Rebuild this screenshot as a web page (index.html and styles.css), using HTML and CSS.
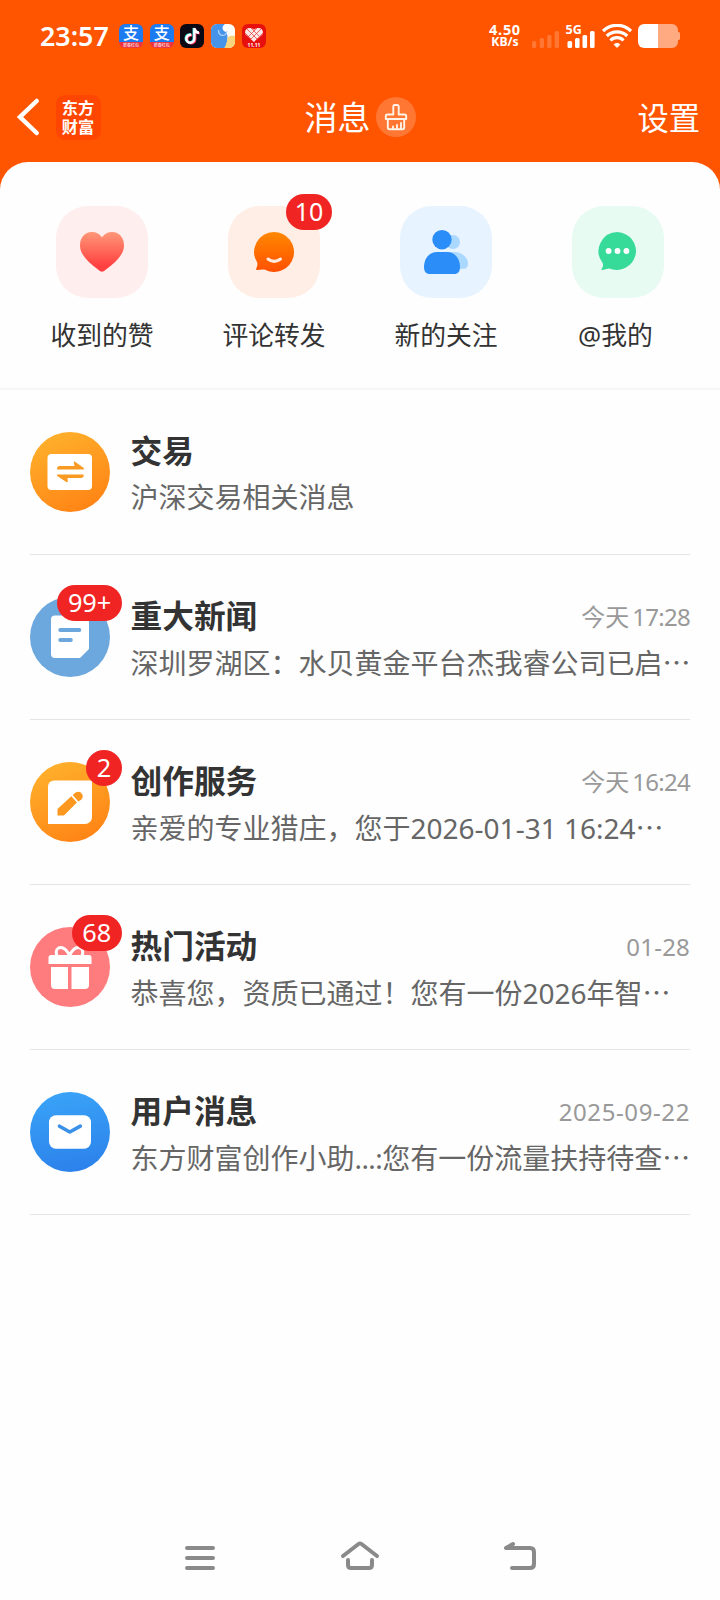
FILE: index.html
```html
<!DOCTYPE html>
<html lang="zh-CN">
<head>
<meta charset="utf-8">
<title>消息</title>
<link rel="stylesheet" href="styles.css">
</head>
<body>
<div class="screen">
  <div class="status">
    <span class="clock">23:57</span>
    <div class="apps">
      <div class="app pay"><b>支</b><i>新春红包</i></div>
      <div class="app pay"><b>支</b><i>新春红包</i></div>
      <svg class="app" viewBox="0 0 24 24"><rect width="24" height="24" fill="#0b0914"/><g fill="none" stroke-width="2.400"><path d="M11.300 10.800a4 4 0 1 0 3.100 3.900V4.300c.4 2.600 1.800 4.100 4.600 4.400" stroke="#f5335b" transform="translate(.8 .7)"/><path d="M11.300 10.800a4 4 0 1 0 3.100 3.900V4.300c.4 2.600 1.800 4.100 4.600 4.400" stroke="#3fe6e2" transform="translate(-.7 -.3)"/><path d="M11.300 10.800a4 4 0 1 0 3.100 3.900V4.300c.4 2.600 1.800 4.100 4.600 4.400" stroke="#fff"/></g></svg>
      <svg class="app" viewBox="0 0 24 24"><rect width="24" height="24" fill="#fffdf8"/><path d="M0 0h14c-3 2-3 5-1 7 2.500 1 3.500 3 3.500 6 0 4-1 8-3 11H0z" fill="#4693ea"/><path d="M16.500 13c3-1.500 5-1.500 7.500-1v12H13.500c2-4 3-7 3-11z" fill="#f8d47c"/><path d="M7.500 6c0 7 7.500 7 8.500 1" fill="none" stroke="#b5d6fb" stroke-width="1.200"/></svg>
      <svg class="app" viewBox="0 0 24 24"><rect width="24" height="24" fill="#e6100f"/><path d="M12 18 3.500 10.500C1.500 6 6 1.500 12 5.500c6-4 10.500.5 8.500 5z" fill="#fbe9e8"/><path d="m5 5 10 10M9 4l8 8M3 9l6 6M19 5 9 15M15 4 6 13M21 9l-8 8" stroke="#e6302f" stroke-width=".7"/><text class="tiny" x="12" y="23" text-anchor="middle">11.11</text></svg>
    </div>
    <div class="speed"><span class="num">4.50</span><span class="unit">KB/s</span></div>
    <svg class="sig" width="27" height="24" viewBox="0 0 27 24" fill="#fff" opacity=".2"><rect y="17" width="4.300" height="7" rx="1.500"/><rect x="7.700" y="14" width="4.300" height="10" rx="1.500"/><rect x="15.200" y="11" width="4.300" height="13" rx="1.500"/><rect x="22.700" y="7" width="4.300" height="17" rx="1.500"/></svg>
    <svg class="sig5" width="29" height="24" viewBox="0 0 29 24" fill="#fff"><text class="gen" x="-.5" y="10">5G</text><rect x="1.500" y="17" width="4.600" height="7" rx="1.500"/><rect x="9" y="14" width="4.600" height="10" rx="1.500"/><rect x="16.500" y="11" width="4.600" height="13" rx="1.500"/><rect x="24" y="7" width="4.600" height="17" rx="1.500"/></svg>
    <svg class="wifi" width="30" height="24" viewBox="0 0 30 24" fill="none" stroke="#fff" stroke-width="3.200"><path d="M1 7a20 20 0 0 1 28 0"/><path d="M4.800 12a14.600 14.600 0 0 1 20.400 0"/><path d="M8.500 16.500a9 9 0 0 1 13 0"/><path d="M12 20.500a4.500 4.500 0 0 1 6 0L15 23.500z" fill="#fff" stroke-width=".8"/></svg>
    <svg class="batt" width="42" height="24" viewBox="0 0 42 24"><path d="M20 0h14a6 6 0 0 1 6 6v2h.500a1.500 1.500 0 0 1 1.500 1.500v5a1.500 1.500 0 0 1-1.500 1.500H40v2a6 6 0 0 1-6 6H20z" fill="#ffaa80"/><path d="M20 0H6a6 6 0 0 0-6 6v12a6 6 0 0 0 6 6h14z" fill="#fff"/></svg>
  </div>

  <div class="nav">
    <div class="nav-left">
      <svg width="24" height="40" viewBox="0 0 24 40" fill="none" stroke="#fff" stroke-width="4.500" stroke-linecap="round"><path d="M20.700 4 4 20l16.700 16" stroke-linejoin="miter"/></svg>
      <div class="logo"><span>东方</span><span>财富</span></div>
    </div>
    <div class="nav-title"><span>消息</span>
      <div class="clean"><svg width="40" height="40" viewBox="0 0 40 40" fill="none" stroke="#fff3e8" stroke-width="1.900" stroke-linejoin="round" stroke-linecap="round"><path d="M17.300 17.500V9.500a1.500 1.500 0 0 1 1.500-1.500h2.400a1.500 1.500 0 0 1 1.500 1.500v8h6a1.500 1.500 0 0 1 1.500 1.500v3H9.800v-3a1.500 1.500 0 0 1 1.500-1.500z"/><path d="M11.800 22.500v8a1.800 1.800 0 0 0 1.800 1.800h12.800a1.800 1.800 0 0 0 1.800-1.800v-8M17 32v-2.500M21 32v-4M25 32v-6"/></svg></div>
    </div>
    <span class="nav-right">设置</span>
  </div>

  <main class="sheet">
    <div class="tiles">
      <div class="tile"><div class="box pink"><svg width="92" height="92" viewBox="0 0 92 92"><defs><linearGradient id="h" x1="0" y1="0" x2="0" y2="1"><stop offset="0" stop-color="#ff9878"/><stop offset=".85" stop-color="#ff4040"/></linearGradient></defs><path d="M46 65.800c-1 0-2.300-.8-4-2.200C32 56 24 48.500 24 39.500 24 31.500 29 26 35.500 26c4.600 0 8.500 2 10.500 5.600C48 28 52 26 56.500 26 63 26 68 31.500 68 39.500c0 9-8 16.500-18 24.100-1.700 1.400-3 2.200-4 2.200z" fill="url(#h)"/></svg></div><span>收到的赞</span></div>
      <div class="tile"><div class="box peach"><svg width="92" height="92" viewBox="0 0 92 92"><defs><linearGradient id="o" x1="0" y1="0" x2="0" y2="1"><stop offset="0" stop-color="#ff8800"/><stop offset="1" stop-color="#ff5000"/></linearGradient></defs><path d="M46 26a20 20 0 1 1-9.500 37.600c-2.500-.4-5 .2-7.300.5-1 .1-1.400-.6-1-1.300 1-2 1.600-4.500 1-6.300A20 20 0 0 1 46 26z" fill="url(#o)"/><path d="M40 53q6 4.800 12.500 0" fill="none" stroke="#ffece0" stroke-width="3" stroke-linecap="round"/></svg><span class="badge">10</span></div><span>评论转发</span></div>
      <div class="tile"><div class="box sky"><svg width="92" height="92" viewBox="0 0 92 92"><g fill="#aad8ff"><circle cx="53" cy="36" r="7"/><path d="M46 46h8c8 0 14 5.500 14 12 0 3-1.500 4.800-5 4.800H46z"/></g><g fill="#2a8df8"><circle cx="42" cy="33.700" r="9.700"/><path d="M37 46h10c7.500 0 13 6.500 13 15 0 4.500-2 7-6 7H30c-4 0-6-2.500-6-7 0-8.500 5.500-15 13-15z"/></g></svg></div><span>新的关注</span></div>
      <div class="tile"><div class="box mint"><svg width="92" height="92" viewBox="0 0 92 92"><path d="M45.500 26a19.500 19 0 1 1-8.300 36.600c-2.400.1-4 1.100-6.700 1.400-1 .1-1.300-.6-.8-1.200 1.500-2 1.800-4 .8-6A19.200 19.200 0 0 1 45.500 26z" fill="#36db9a"/><g fill="#fff"><circle cx="36.600" cy="45" r="2.900"/><circle cx="45.500" cy="45" r="2.900"/><circle cx="54.400" cy="45" r="2.900"/></g></svg></div><span class="at">@我的</span></div>
    </div>

    <div class="list">
      <div class="row">
        <div class="avatar amber"><svg width="80" height="80" viewBox="0 0 80 80"><rect x="17.500" y="22" width="44.500" height="36" rx="4" fill="#fff"/><path d="M29.500 34H44.500L43.800 30.500q-.3-1.600 1.200-.8L53.800 36q.8 1.500-.8 1.500H27q0-3.500 2.500-3.500z" fill="#f99a25"/><path d="M53.800 42.500q0 3.500-3 3.500H37.500l.3 3q0 1.600-1.500 1L27.200 44q-1-1.500.3-1.500z" fill="#f99a25"/></svg></div>
        <div class="body"><div class="top"><span class="name">交易</span></div><div class="desc">沪深交易相关消息</div></div>
      </div>
      <div class="row">
        <div class="avatar blue"><svg width="80" height="80" viewBox="0 0 80 80"><path d="M25 18.500h30a4 4 0 0 1 4 4V52l-9 9H25a4 4 0 0 1-4-4V22.500a4 4 0 0 1 4-4z" fill="#fff"/><path d="M30.300 33h19M30.300 43h10.500" stroke="#6ba6dc" stroke-width="4" stroke-linecap="round"/></svg><span class="badge">99+</span></div>
        <div class="body"><div class="top"><span class="name">重大新闻</span><span class="time today"><span class="day">今天</span>17:28</span></div><div class="desc">深圳罗湖区：水贝黄金平台杰我睿公司已启<span class="more">…</span></div></div>
      </div>
      <div class="row">
        <div class="avatar amber"><svg width="80" height="80" viewBox="0 0 80 80"><path d="M24 18.500h38V55a7 7 0 0 1-7 7H18V24.500a6 6 0 0 1 6-6z" fill="#fff"/><path d="M27.500 53.500V47L41.300 34.300l5.600 6.200L34 53.500zM42.700 33l2-1.700a4.500 4.500 0 0 1 6.800 6.300L48.300 39.600z" fill="#fc9820"/></svg><span class="badge">2</span></div>
        <div class="body"><div class="top"><span class="name">创作服务</span><span class="time today"><span class="day">今天</span>16:24</span></div><div class="desc">亲爱的专业猎庄，您于<span class="lat">2026-01-31 16:24</span><span class="more">…</span></div></div>
      </div>
      <div class="row">
        <div class="avatar rose"><svg width="80" height="80" viewBox="0 0 80 80"><path d="M21 28h38a2.500 2.500 0 0 1 2.500 2.500V37h-43v-6.500A2.500 2.500 0 0 1 21 28zM21 40h17v22H25a4 4 0 0 1-4-4zM41.500 40H59v18a4 4 0 0 1-4 4H41.500z" fill="#fff"/><path d="M39.500 28.500c-3-6-7-9-11-7.500-3 1.500-2.500 5.500-1.500 7.500M39.500 28.500c3-6 7-9 11-7.500 3 1.500 2.500 5.500 1.500 7.500" fill="none" stroke="#fff" stroke-width="3"/></svg><span class="badge">68</span></div>
        <div class="body"><div class="top"><span class="name">热门活动</span><span class="time">01-28</span></div><div class="desc">恭喜您，资质已通过！您有一份<span class="lat">2026</span>年智<span class="more">…</span></div></div>
      </div>
      <div class="row">
        <div class="avatar azure"><svg width="80" height="80" viewBox="0 0 80 80"><rect x="19" y="23.300" width="42" height="33.500" rx="7" fill="#fff"/><path d="M29.500 34.200 39.800 40l10.500-5.800" fill="none" stroke="#3a8fe8" stroke-width="3.600" stroke-linecap="round" stroke-linejoin="round"/></svg></div>
        <div class="body"><div class="top"><span class="name">用户消息</span><span class="time full">2025-09-22</span></div><div class="desc">东方财富创作小助<span class="dots">...:</span>您有一份流量扶持待查<span class="more">…</span></div></div>
      </div>
    </div>
  </main>

  <div class="keys">
    <svg width="40" height="40" viewBox="0 0 40 40"><path d="M7 10h26M7 20h26M7 30h26"/></svg>
    <svg width="40" height="40" viewBox="0 0 40 40"><path d="M3 18 18.500 6q1.500-1.100 3 0L37 18M8 22v5q0 3 3 3h18q3 0 3-3v-5"/></svg>
    <svg width="40" height="40" viewBox="0 0 40 40"><path d="M13 6 6 10h24q4 0 4 4v12q0 4-4 4H12"/></svg>
  </div>
</div>
</body>
</html>
```

FILE: styles.css
```css
* { box-sizing: border-box; }

body {
  margin: 0;
  font-family: "Noto Sans", "Noto Sans CJK SC", sans-serif;
  background: #fff;
}

svg { display: block; flex: none; }

.screen {
  width: 720px;
  height: 1600px;
  display: flex;
  flex-direction: column;
  background: linear-gradient(#ff5500 0 220px, #fefefe 220px);
  overflow: hidden;
}

/* status bar */
.status {
  height: 72px;
  padding: 24px 40px 24px 40px;
  display: flex;
  color: #fff;
}
.clock {
  width: 79px;
  font-size: 26.800px;
  font-weight: 600;
  line-height: 24px;
}
.apps { display: flex; gap: 6.700px; flex: 1; }
.app {
  width: 24px;
  height: 24px;
  border-radius: 6px;
}
svg.app { overflow: hidden; }
.pay {
  background: linear-gradient(#1d7bf2 0 18px, #ee3340 18px);
  display: flex;
  flex-direction: column;
  align-items: center;
}
.pay b {
  height: 18px;
  font: 500 16px/17px "Noto Sans CJK SC", sans-serif;
}
.pay i {
  font: 400 4px/6px "Noto Sans CJK SC", sans-serif;
  white-space: nowrap;
}
.tiny { font: 700 5px "Noto Sans", sans-serif; fill: #fff; }
.speed {
  width: 34px;
  display: flex;
  flex-direction: column;
  align-items: center;
  font-weight: 700;
}
.num { font-size: 14.500px; line-height: 10px; height: 13px; letter-spacing: .7px; }
.unit { font-size: 12.200px; line-height: 16px; }
.sig { margin-left: 10px; }
.sig5 { margin-left: 7px; overflow: visible; }
.gen { font: 700 12.500px "Noto Sans", sans-serif; letter-spacing: 0; }
.wifi { margin-left: 7px; }
.batt { margin-left: 6px; }

/* title bar */
.nav {
  height: 90px;
  padding: 0 20px 0 16px;
  display: grid;
  grid-template-columns: 1fr auto 1fr;
  align-items: center;
  color: #fff;
}
.nav-left { display: flex; align-items: center; gap: 15.500px; }
.logo {
  width: 45px;
  height: 45px;
  border-radius: 9px;
  background: #ff4600;
  display: flex;
  flex-direction: column;
  align-items: center;
  justify-content: center;
}
.logo span {
  font: 700 16.200px/19.500px "Noto Sans CJK SC", sans-serif;
}
.nav-title {
  display: flex;
  align-items: center;
  gap: 5px;
  padding-left: 4px;
  font-size: 33px;
  line-height: 40px;
}
.nav-title span { padding-top: 2px; }
.clean {
  width: 40px;
  height: 40px;
  border-radius: 50%;
  background: rgba(255, 255, 255, .2);
}
.nav-right { justify-self: end; padding-top: 1px; font-size: 31.300px; line-height: 40px; }

/* content sheet */
.sheet {
  flex: 1;
  background: #fefefe;
  border-radius: 28px 28px 0 0;
}
.tiles {
  height: 228px;
  padding: 44px 16px 0;
  border-bottom: 2px solid #f6f6f6;
  display: grid;
  grid-template-columns: repeat(4, 1fr);
}
.tile {
  display: flex;
  flex-direction: column;
  align-items: center;
  gap: 17px;
  font-size: 25.800px;
  line-height: 40px;
  color: #333;
}
.at { margin-left: -5px; }
.box { position: relative; width: 92px; height: 92px; border-radius: 32px; }
.pink { background: #ffeeee; }
.peach { background: #ffeee6; }
.sky { background: #e7f3ff; }
.mint { background: #e8fbf3; }

.badge {
  position: absolute;
  top: -12px;
  right: -12px;
  min-width: 36px;
  height: 36px;
  padding: 0 10.700px;
  border-radius: 18px;
  background: #f12424;
  color: #fff;
  font-size: 25px;
  line-height: 35px;
  text-align: center;
}
.avatar .badge { font-size: 25.300px; }
.box .badge { right: auto; left: 58px; padding: 0; width: 46px; }

.list { padding: 0 30px; }
.row {
  height: 165px;
  padding-top: 37px;
  border-bottom: 1px solid #e5e5e5;
  display: flex;
  gap: 20px;
}
.avatar {
  position: relative;
  width: 80px;
  height: 80px;
  margin-top: 5px;
  border-radius: 50%;
}
.amber { background: linear-gradient(155deg, #ffb52e, #ff7e12); }
.blue { background: #6ca7dd; }
.rose { background: #ff7c7e; }
.azure { background: linear-gradient(170deg, #3aa5f8, #2b7fea); }

.body { flex: 1; min-width: 0; padding-left: .5px; }
.top {
  height: 47px;
  display: flex;
  justify-content: space-between;
  align-items: center;
}
.name { font-size: 31.700px; font-weight: 600; line-height: 44px; color: #333; }
.time { padding-top: 2px; font-size: 24px; line-height: 40px; color: #999; letter-spacing: .2px; }
.today { letter-spacing: -.7px; }
.full { letter-spacing: .6px; }
.day { margin-right: 3px; letter-spacing: 0; }
.desc {
  height: 46px;
  font-size: 28px;
  line-height: 47px;
  color: #666;
  white-space: nowrap;
}
.dots { letter-spacing: -.6px; }
.more { font-family: "Noto Sans CJK SC", sans-serif; }

/* system navigation keys */
.keys {
  height: 62px;
  padding: 0 180px;
  display: flex;
  justify-content: space-between;
  background: #fefefe;
}
.keys path {
  fill: none;
  stroke: #8a8a8a;
  stroke-width: 4;
  stroke-linecap: round;
  stroke-linejoin: round;
}
```
